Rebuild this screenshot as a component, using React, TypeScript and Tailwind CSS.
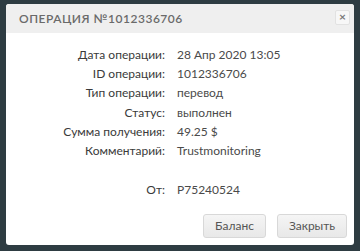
import React from "react";

const rows: [string, string][] = [
  ["Дата операции:", "28 Апр 2020 13:05"],
  ["ID операции:", "1012336706"],
  ["Тип операции:", "перевод"],
  ["Статус:", "выполнен"],
  ["Сумма получения:", "49.25 $"],
  ["Комментарий:", "Trustmonitoring"],
  ["", ""],
  ["От:", "P75240524"],
];

export default function App() {
  return (
    <div
      className="w-[360px] h-[251px] bg-[#2e3c42] pt-[4px] pl-[6px]"
      style={{ fontFamily: "Lato, 'Open Sans', sans-serif" }}
    >
      <div className="w-[348px] h-[241px] bg-white rounded-[3px] overflow-hidden flex flex-col">
        <div className="h-[29px] bg-[#efefef] flex items-center justify-between pl-[13px] pr-[4px]">
          <span className="text-[12px] tracking-[0.5px] text-[#6a6a6a] font-semibold">
            ОПЕРАЦИЯ №1012336706
          </span>
          <div className="w-[15px] h-[15px] mt-[-3px] border border-[#e2e2e2] bg-[#f7f7f7] rounded-[2px] flex items-center justify-center text-[12px] font-bold text-[#777] leading-none">
            ×
          </div>
        </div>
        <div className="pt-[12px] flex flex-col">
          {rows.map(([l, v], i) => (
            <div key={i} className="flex h-[19.3px] items-center text-[12px] leading-none">
              <div className="w-[159px] text-right text-[#3a3a3a]">{l}</div>
              <div className="pl-[12px] text-[#4a4a4a]">{v}</div>
            </div>
          ))}
        </div>
        <div className="flex justify-end gap-[11px] pr-[7px] mt-[15px]">
          <button className="w-[63px] h-[24px] rounded-[3px] border border-[#d8d8d8] bg-gradient-to-b from-[#f5f5f5] to-[#e8e8e8] text-[12px] text-[#555]">
            Баланс
          </button>
          <button className="w-[70px] h-[24px] rounded-[3px] border border-[#d8d8d8] bg-gradient-to-b from-[#f5f5f5] to-[#e8e8e8] text-[12px] text-[#555]">
            Закрыть
          </button>
        </div>
      </div>
    </div>
  );
}
